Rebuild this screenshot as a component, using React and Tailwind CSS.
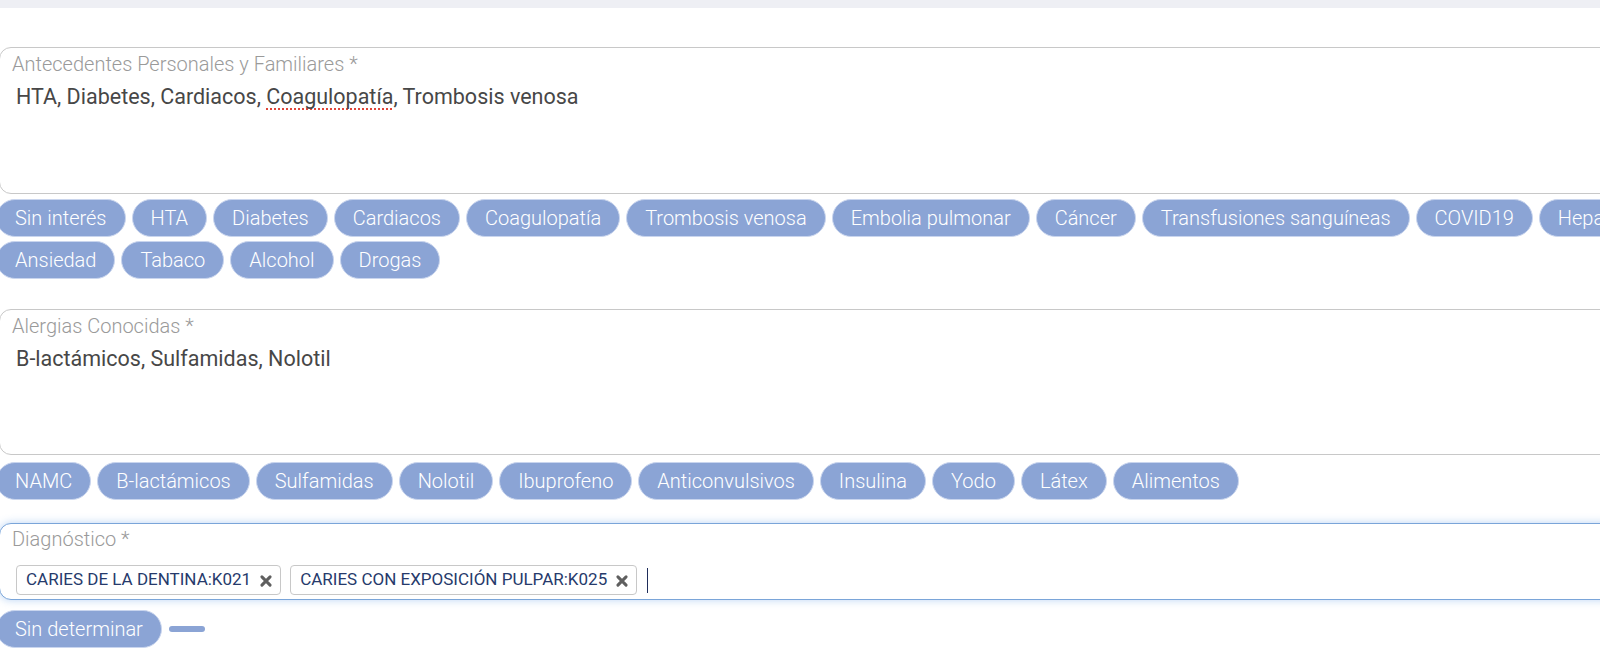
import React from 'react';

const antecedentes = [
  'Sin interés', 'HTA', 'Diabetes', 'Cardiacos', 'Coagulopatía', 'Trombosis venosa',
  'Embolia pulmonar', 'Cáncer', 'Transfusiones sanguíneas', 'COVID19', 'Hepatitis',
  'Ansiedad', 'Tabaco', 'Alcohol', 'Drogas',
];

const alergias = [
  'NAMC', 'B-lactámicos', 'Sulfamidas', 'Nolotil', 'Ibuprofeno', 'Anticonvulsivos',
  'Insulina', 'Yodo', 'Látex', 'Alimentos',
];

const light = { fontFamily: '"Roboto Light", Roboto, sans-serif', fontWeight: 300 };

function Chip({ children }) {
  return (
    <button
      className="h-[38px] px-[18px] rounded-full bg-[#8ba4d5] border border-[#c9d5ee] text-white text-[20px] leading-none whitespace-nowrap"
      style={light}
    >
      {children}
    </button>
  );
}

function ChipRow({ items, className = '' }) {
  return (
    <div className={`-ml-1 flex flex-wrap gap-x-[6px] gap-y-[4px] ${className}`}>
      {items.map((item) => (
        <Chip key={item}>{item}</Chip>
      ))}
    </div>
  );
}

function TextBox({ label, height, children }) {
  return (
    <div className={`-ml-px w-[1640px] ${height} rounded-[12px] border-[1.5px] border-[#c8c8c8] bg-white pt-[4px]`}>
      <div className="pl-[12px] text-[20px] leading-[24px] text-[#9a9a9a]" style={light}>{label}</div>
      <div className="pl-[16px] mt-[8px] text-[21.5px] leading-[26px] text-[#474747]">{children}</div>
    </div>
  );
}

function Tag({ text }) {
  return (
    <span className="h-[30px] flex items-center gap-[8px] pl-[9px] pr-[7px] border border-[#c8c8c8] rounded-[4px] text-[17px] text-[#263a6b] uppercase">
      {text}
      <svg width="14" height="14" viewBox="0 0 12 12" className="mt-[2px]">
        <path d="M2.5 2.5 L9.5 9.5 M9.5 2.5 L2.5 9.5" stroke="#5f5f5f" strokeWidth="2.6" strokeLinecap="round" />
      </svg>
    </span>
  );
}

export default function App() {
  return (
    <div className="w-[1600px] h-[649px] overflow-hidden bg-white" style={{ fontFamily: 'Roboto, "Noto Sans", sans-serif' }}>
      <div className="h-2 bg-[#eeeff4]" />

      <div className="pt-[39px]">
        <TextBox label="Antecedentes Personales y Familiares *" height="h-[147px]">
          HTA, Diabetes, Cardiacos,{' '}
          <span className="underline decoration-dotted decoration-[#e0463a] decoration-2 underline-offset-4">Coagulopatía</span>
          , Trombosis venosa
        </TextBox>
        <ChipRow items={antecedentes} className="mt-[5px] w-[1700px]" />
      </div>

      <div className="pt-[30px]">
        <TextBox label="Alergias Conocidas *" height="h-[146px]">B-lactámicos, Sulfamidas, Nolotil</TextBox>
        <ChipRow items={alergias} className="mt-[7px] w-[1700px]" />
      </div>

      <div className="pt-[23px]">
        <div className="-ml-px w-[1640px] h-[77px] rounded-[12px] border-[1.5px] border-[#7aa5d9] bg-white pt-[3px] shadow-[0_0_8px_rgba(102,160,230,0.45)]">
          <div className="pl-[12px] text-[20px] leading-[24px] text-[#9a9a9a]" style={light}>Diagnóstico *</div>
          <div className="pl-[16px] mt-[14px] flex items-center gap-[9px]">
            <Tag text="Caries de la dentina:K021" />
            <Tag text="Caries con exposición pulpar:K025" />
            <span className="ml-px w-px h-[25px] bg-[#1f2d5a]" />
          </div>
        </div>
        <div className="mt-[10px] -ml-1 flex items-center gap-[7px]">
          <Chip>Sin determinar</Chip>
          <span className="w-[36px] h-[6px] rounded-full bg-[#8ba4d5]" />
        </div>
      </div>
    </div>
  );
}
